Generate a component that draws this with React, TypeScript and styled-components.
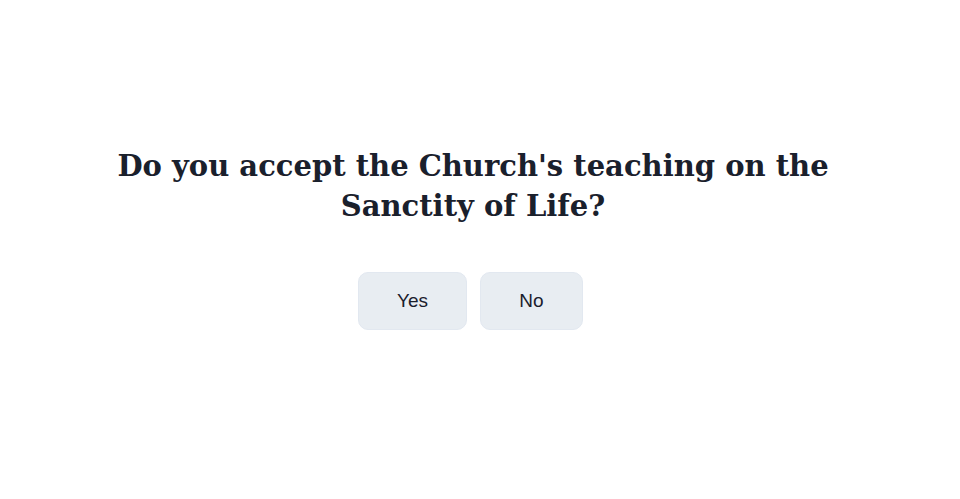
import React from 'react'
import styled, { createGlobalStyle } from 'styled-components'

const GlobalStyle = createGlobalStyle`
  html, body {
    margin: 0;
    padding: 0;
    background: #ffffff;
  }
`

const Page = styled.div`
  align-items: center;
  box-sizing: border-box;
  display: flex;
  flex-direction: column;
  height: 499px;
  padding: 146px 14px 0 0;
`

const Question = styled.h1`
  color: #1a202c;
  font-family: 'DejaVu Serif', 'Liberation Serif', serif;
  font-size: 29px;
  font-weight: 700;
  line-height: 40px;
  margin: 0;
  max-width: 740px;
  text-align: center;
`

const Answers = styled.div`
  display: flex;
  gap: 13px;
  margin-top: 46px;
  margin-left: -5px;
`

const Answer = styled.button<{ width: number }>`
  background: #e8edf2;
  border: 1px solid #e2e8f0;
  border-radius: 10px;
  color: #1a202c;
  cursor: pointer;
  font-family: 'Liberation Sans', Arial, sans-serif;
  font-size: 19px;
  height: 58px;
  width: ${props => props.width}px;
`

export default function App() {
  return (
    <>
      <GlobalStyle />
      <Page>
        <Question>Do you accept the Church's teaching on the Sanctity of Life?</Question>
        <Answers>
          <Answer width={109}>Yes</Answer>
          <Answer width={103}>No</Answer>
        </Answers>
      </Page>
    </>
  )
}
